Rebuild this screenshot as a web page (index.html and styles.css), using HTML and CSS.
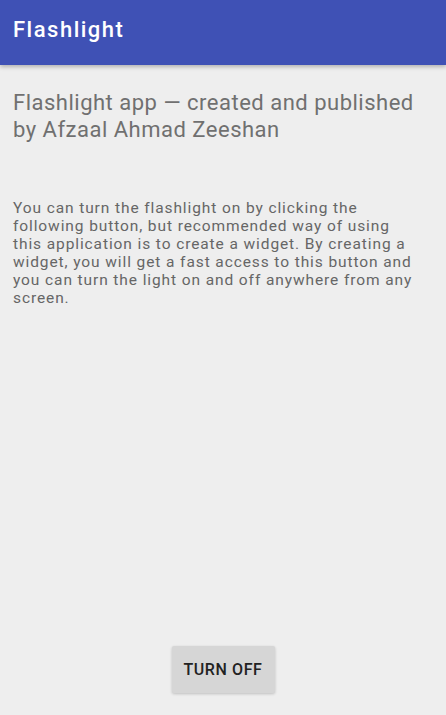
FILE: index.html
```html
<!DOCTYPE html>
<html lang="en">
<head>
    <meta charset="UTF-8">
    <meta name="viewport" content="width=device-width, initial-scale=1.0">
    <title>Flashlight</title>
<link rel="stylesheet" href="styles.css">
</head>
<body>
    <div class="app">
        <header class="toolbar">
            <h1>Flashlight</h1>
        </header>
        <main class="content">
            <h2 class="lead">Flashlight app &mdash; created and published by Afzaal Ahmad Zeeshan</h2>
            <p class="info">You can turn the flashlight on by clicking the following button, but recommended way of using this application is to create a widget. By creating a widget, you will get a fast access to this button and you can turn the light on and off anywhere from any screen.</p>
            <div class="actions">
                <button class="toggle">TURN OFF</button>
            </div>
        </main>
    </div>
</body>
</html>
```

FILE: styles.css
```css
html, body {
  margin: 0;
  height: 100%;
}

body {
  font-family: Roboto, "Noto Sans", sans-serif;
  background-color: #eeeeee;
}

.app {
  display: flex;
  flex-direction: column;
  height: 100%;
}

.toolbar {
  background-color: #3f51b5;
  height: 65px;
  display: flex;
  align-items: center;
  padding: 0 13px;
  box-shadow: 0 2px 4px rgba(0, 0, 0, 0.25);
}

.toolbar h1 {
  margin: 0 0 6px 0;
  color: #fff;
  font-size: 22px;
  font-weight: 500;
  letter-spacing: 1.5px;
}

.content {
  flex: 1;
  display: flex;
  flex-direction: column;
  padding: 0 13px;
}

.lead {
  margin: 24px 0 0 0;
  max-width: 410px;
  font-size: 22px;
  font-weight: 400;
  line-height: 27px;
  letter-spacing: 0.5px;
  color: #707070;
}

.info {
  margin: 56px 0 0 0;
  max-width: 405px;
  font-size: 15.5px;
  line-height: 18px;
  letter-spacing: 0.9px;
  color: #666666;
}

.actions {
  margin-top: auto;
  display: flex;
  justify-content: center;
  padding-bottom: 22px;
}

.toggle {
  font-family: Roboto, sans-serif;
  background-color: #d6d6d6;
  color: #222;
  border: none;
  border-radius: 2px;
  width: 103px;
  height: 47px;
  font-size: 16px;
  font-weight: 500;
  letter-spacing: 0.6px;
  box-shadow: 0 1px 3px rgba(0, 0, 0, 0.2);
}
```
